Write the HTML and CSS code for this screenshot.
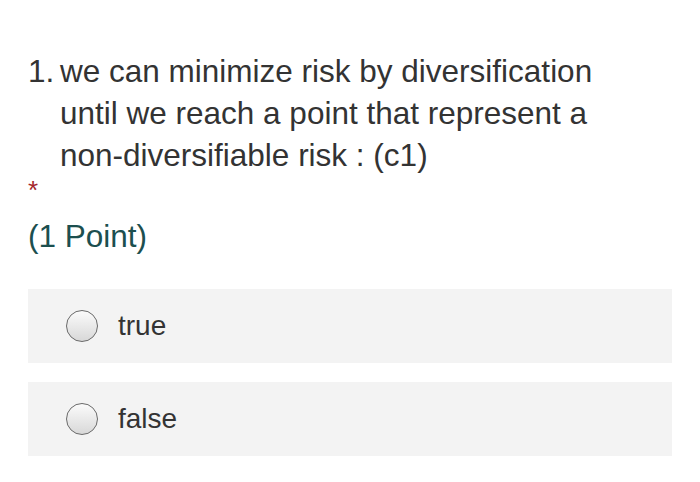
FILE: index.html
```html
<!DOCTYPE html>
<html>
<head>
<meta charset="utf-8">
<link rel="stylesheet" href="styles.css">
</head>
<body>
<div class="question">
  <div class="title">
    <span class="num">1.</span>
    <span class="text">we can minimize risk by diversification until we reach a point that represent a non-diversifiable risk : (c1)</span>
  </div>
  <div class="req">*</div>
  <div class="points">(1 Point)</div>
  <div class="options">
    <label class="option"><span class="radio"></span><span class="label">true</span></label>
    <label class="option"><span class="radio"></span><span class="label">false</span></label>
  </div>
</div>
</body>
</html>
```
FILE: styles.css
```css
html, body { margin: 0; padding: 0; background: #fff; }
body { font-family: "Liberation Sans", Arial, sans-serif; color: #333; width: 700px; height: 482px; overflow: hidden; }
.question { padding: 50px 28px 0 28px; }
.title { display: flex; font-size: 31.5px; line-height: 42px; color: #333; }
.num { width: 32px; flex: none; }
.text { width: 560px; }
.req { color: #a4262c; font-size: 26px; line-height: 24px; margin-top: 2px; height: 20px; }
.points { color: #1c4f4f; font-size: 31.5px; line-height: 40px; margin-top: 18px; }
.options { margin-top: 33px; display: flex; flex-direction: column; gap: 19px; }
.option { display: flex; align-items: center; height: 74px; background: #f3f3f3; padding-left: 38px; }
.radio { width: 30px; height: 30px; border-radius: 50%; border: 1.5px solid #6a6a6a; background: linear-gradient(#fbfbfb, #d8d8d8); flex: none; }
.label { margin-left: 20px; font-size: 28px; color: #333; }
```
